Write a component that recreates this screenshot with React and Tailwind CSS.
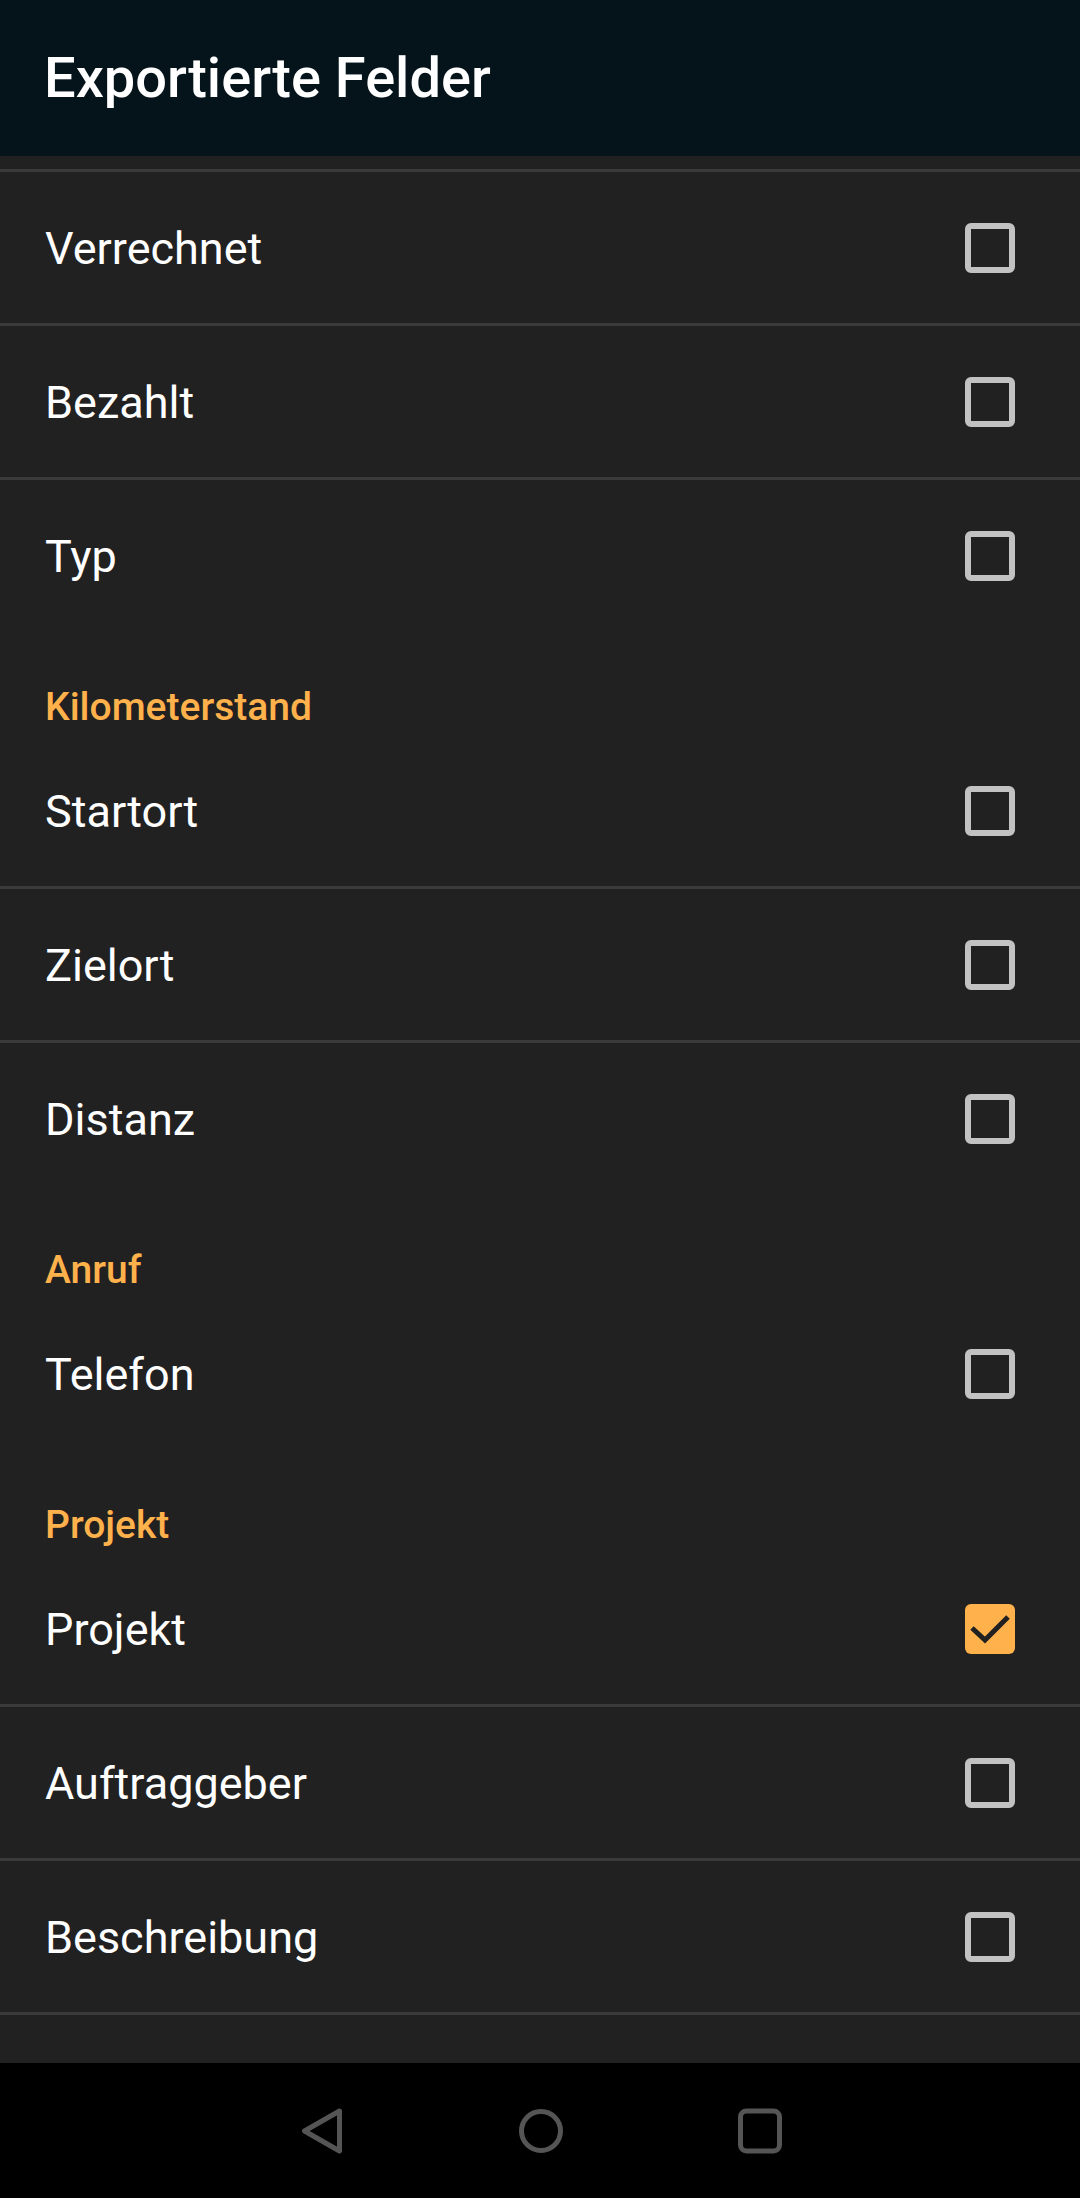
import React, { useState } from 'react';

const ITEMS = [
  { type: 'row', label: 'Verrechnet', divider: true },
  { type: 'row', label: 'Bezahlt', divider: true },
  { type: 'row', label: 'Typ' },
  { type: 'cat', label: 'Kilometerstand' },
  { type: 'row', label: 'Startort', divider: true },
  { type: 'row', label: 'Zielort', divider: true },
  { type: 'row', label: 'Distanz' },
  { type: 'cat', label: 'Anruf' },
  { type: 'row', label: 'Telefon' },
  { type: 'cat', label: 'Projekt' },
  { type: 'row', label: 'Projekt', divider: true, checked: true },
  { type: 'row', label: 'Auftraggeber', divider: true },
  { type: 'row', label: 'Beschreibung', divider: true },
];

const Checkbox = ({ checked, onClick }) => (
  <button onClick={onClick} className="w-[50px] h-[50px] shrink-0">
    {checked ? (
      <span className="block w-[50px] h-[50px] rounded-[6px] bg-[#ffb14b]">
        <svg width="50" height="50" viewBox="0 0 50 50">
          <path d="M7 24 L20 36 L43 13" fill="none" stroke="#212121" strokeWidth="5" />
        </svg>
      </span>
    ) : (
      <span className="block w-[50px] h-[50px] rounded-[6px] border-[6px] border-[#c2c2c2]" />
    )}
  </button>
);

export default function App() {
  const [checked, setChecked] = useState(
    Object.fromEntries(ITEMS.map((it, i) => [i, !!it.checked]))
  );

  return (
    <div className="w-[1080px] h-[2198px] flex flex-col bg-[#212121] overflow-hidden" style={{ fontFamily: 'Roboto, "Noto Sans", sans-serif' }}>
      {/* App bar */}
      <div className="h-[156px] shrink-0 bg-[#04141a] flex items-center px-[44px]">
        <h1 className="text-[56px] leading-none font-medium text-white">Exportierte Felder</h1>
      </div>

      {/* Preference list */}
      <div className="flex-1 overflow-hidden">
        <div className="h-[13px]" />
        <div className="h-[3px] bg-[#3a3a3a]" />
        {ITEMS.map((it, i) =>
          it.type === 'cat' ? (
            <div key={i} className="h-[104px] pt-[57px] pl-[45px]">
              <p className="text-[39px] leading-[39px] font-medium text-[#ffb14b]">{it.label}</p>
            </div>
          ) : (
            <div key={i}>
              <div className="h-[151px] flex items-center justify-between pl-[45px] pr-[65px]">
                <span className="text-[45px] leading-[45px] text-white pt-[2px]">{it.label}</span>
                <Checkbox checked={checked[i]} onClick={() => setChecked({ ...checked, [i]: !checked[i] })} />
              </div>
              {it.divider && <div className="h-[3px] bg-[#3a3a3a]" />}
            </div>
          )
        )}
      </div>

      {/* Navigation bar */}
      <div className="h-[135px] shrink-0 bg-black flex items-center pl-[282px] gap-[139px]">
        <svg width="80" height="50" viewBox="0 0 80 50">
          <path d="M57.5 5 L22.5 25 L57.5 45 Z" fill="none" stroke="#555" strokeWidth="5" strokeLinejoin="round" />
        </svg>
        <svg width="80" height="50" viewBox="0 0 80 50">
          <circle cx="40" cy="25" r="19.5" fill="none" stroke="#555" strokeWidth="5" />
        </svg>
        <svg width="80" height="50" viewBox="0 0 80 50">
          <rect x="20.5" y="5" width="39" height="40" rx="6" fill="none" stroke="#555" strokeWidth="5" />
        </svg>
      </div>
    </div>
  );
}
